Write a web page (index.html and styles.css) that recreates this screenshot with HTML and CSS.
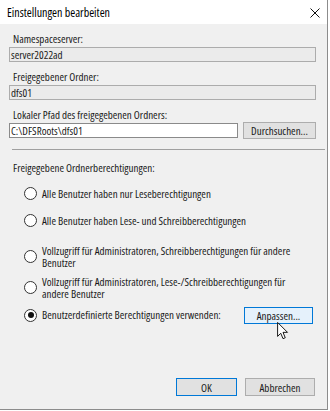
FILE: index.html
```html
<!DOCTYPE html>
<html lang="de">
<head>
    <meta charset="UTF-8">
    <title>Einstellungen bearbeiten</title>
    <link rel="stylesheet" href="styles.css">
</head>
<body>
    <div class="window">
        <!-- TITELLEISTE -->
        <div class="titlebar">
            <span class="title">Einstellungen bearbeiten</span>
            <svg class="close" width="10" height="10" viewBox="0 0 10 10">
                <path d="M0.5 0.5 L9.5 9.5 M9.5 0.5 L0.5 9.5" stroke="#111" stroke-width="1" fill="none"/>
            </svg>
        </div>

        <div class="content">
            <div class="label first">Namespaceserver:</div>
            <div class="field readonly">server2022ad</div>

            <div class="label">Freigegebener Ordner:</div>
            <div class="field readonly">dfs01</div>

            <div class="label">Lokaler Pfad des freigegebenen Ordners:</div>
            <div class="pathrow">
                <div class="field path">C:\DFSRoots\dfs01</div>
                <div class="btn browse">Durchsuchen...</div>
            </div>

            <div class="separator"></div>

            <div class="label perms">Freigegebene Ordnerberechtigungen:</div>

            <div class="options">
                <div class="option first">
                    <span class="radio"></span>
                    <span class="text">Alle Benutzer haben nur Leseberechtigungen</span>
                </div>
                <div class="option second">
                    <span class="radio"></span>
                    <span class="text">Alle Benutzer haben Lese- und Schreibberechtigungen</span>
                </div>
                <div class="option double">
                    <span class="radio"></span>
                    <span class="text">Vollzugriff für Administratoren, Schreibberechtigungen für andere Benutzer</span>
                </div>
                <div class="option double">
                    <span class="radio"></span>
                    <span class="text">Vollzugriff für Administratoren, Lese-/Schreibberechtigungen für andere Benutzer</span>
                </div>
                <div class="option custom">
                    <span class="radio checked"></span>
                    <span class="text">Benutzerdefinierte Berechtigungen verwenden:</span>
                    <div class="btn hover adjust">Anpassen...</div>
                </div>
            </div>

            <div class="footer">
                <div class="btn default ok">OK</div>
                <div class="btn cancel">Abbrechen</div>
            </div>
        </div>

        <!-- MAUSZEIGER -->
        <svg class="cursor" width="12" height="18" viewBox="0 0 13 20">
            <path d="M0.5 0.5 L0.5 16 L4 12.5 L6.5 18.5 L9 17.5 L6.5 11.5 L11.5 11.5 Z" fill="#fff" stroke="#000" stroke-width="1" stroke-linejoin="miter"/>
        </svg>
    </div>
</body>
</html>
```

FILE: styles.css
```css
body {
    margin: 0;
    background-color: #fff;
    font-family: "Open Sans", "Liberation Sans", Arial, sans-serif;
    font-stretch: 87%;
    font-size: 11px;
    color: #1a1a1a;
}
.window {
    position: relative;
    width: 327px;
    height: 409px;
    background-color: #f0f0f0;
    border-right: 1px solid #8c8c8c;
    border-bottom: 1px solid #8c8c8c;
}
.titlebar {
    height: 24px;
    background-color: #fff;
    display: flex;
    align-items: center;
    justify-content: space-between;
    padding: 0 7px 0 7px;
}
.title {
    font-size: 12px;
    font-stretch: 85%;
    color: #000;
}
.close {
    margin-top: 1px;
}
.content {
    padding: 0 11px 0 9px;
}
.label {
    height: 13px;
    line-height: 13px;
    padding-left: 4px;
    margin-top: 8px;
    margin-bottom: 2px;
}
.field {
    height: 13px;
    line-height: 13px;
    border: 1px solid #acacac;
    padding-left: 1px;
    white-space: nowrap;
}
.field.readonly {
    background-color: #ebebeb;
}
.pathrow {
    display: flex;
    align-items: flex-start;
    gap: 5px;
    margin-top: -1px;
}
.field.path {
    width: 226px;
    background-color: #fff;
    border-color: #8a8a8a;
    margin-top: 1px;
}
.btn {
    box-sizing: border-box;
    display: flex;
    align-items: center;
    justify-content: center;
    background-color: #e1e1e1;
    border: 1px solid #adadad;
}
.btn.browse {
    width: 73px;
    height: 17px;
}
.separator {
    height: 1px;
    background-color: #a0a0a0;
    margin: 10px -9px 0 3px;
}
.label.perms {
    margin-top: 11px;
}
.options {
    padding-left: 15px;
    margin-top: 13px;
}
.option {
    display: flex;
    align-items: center;
}
.option .text {
    line-height: 12px;
    padding-left: 5px;
}
.option.first {
    margin-bottom: 14px;
}
.option.second {
    margin-bottom: 17.5px;
}
.option.double {
    margin-bottom: 7px;
}
.option.double .text {
    width: 264px;
}
.option.custom {
    margin-top: 3.5px;
}
.radio {
    box-sizing: border-box;
    flex: none;
    width: 13px;
    height: 13px;
    border: 1px solid #333;
    border-radius: 50%;
    background-color: #fff;
    position: relative;
}
.radio.checked::after {
    content: "";
    position: absolute;
    left: 2.5px;
    top: 2.5px;
    width: 6px;
    height: 6px;
    border-radius: 50%;
    background-color: #111;
}
.btn.adjust {
    width: 69px;
    height: 17px;
    margin-left: auto;
    margin-right: 3px;
}
.btn.hover {
    background-color: #e5f1fb;
    border-color: #0078d7;
}
.footer {
    display: flex;
    justify-content: flex-end;
    gap: 8px;
    margin-top: 54.5px;
    padding-right: 1px;
}
.btn.ok,
.btn.cancel {
    width: 70px;
    height: 18px;
}
.btn.ok {
    width: 61px;
    border-color: #0078d7;
}
.cursor {
    position: absolute;
    left: 277px;
    top: 322px;
}
```
